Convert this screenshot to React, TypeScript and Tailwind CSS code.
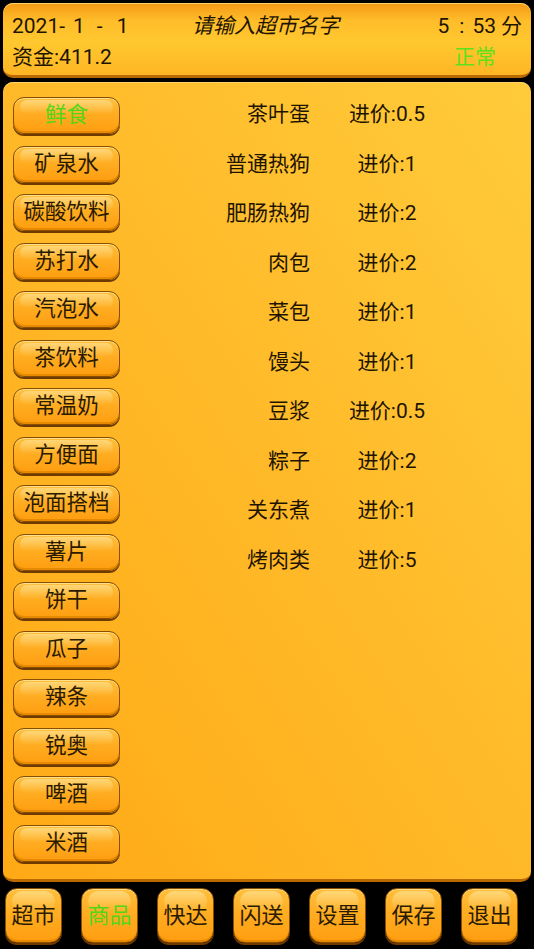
const cats = [
  "鲜食",
  "矿泉水",
  "碳酸饮料",
  "苏打水",
  "汽泡水",
  "茶饮料",
  "常温奶",
  "方便面",
  "泡面搭档",
  "薯片",
  "饼干",
  "瓜子",
  "辣条",
  "锐奥",
  "啤酒",
  "米酒",
];

const goods = [
  { name: "茶叶蛋", price: "0.5" },
  { name: "普通热狗", price: "1" },
  { name: "肥肠热狗", price: "2" },
  { name: "肉包", price: "2" },
  { name: "菜包", price: "1" },
  { name: "馒头", price: "1" },
  { name: "豆浆", price: "0.5" },
  { name: "粽子", price: "2" },
  { name: "关东煮", price: "1" },
  { name: "烤肉类", price: "5" },
];

const tabs = ["超市", "商品", "快达", "闪送", "设置", "保存", "退出"];

const font = "font-['Roboto','Noto_Sans_CJK_SC',sans-serif]";

function GlossButton({ label, active, className }: { label: string; active?: boolean; className: string }) {
  return (
    <button
      className={`relative flex items-center justify-center border border-[#8a4e00] bg-[linear-gradient(to_bottom,#ffbf3c_0%,#ffad22_45%,#ff9d10_100%)] shadow-[0_2px_0_#6e3a00,inset_0_1px_0_#ffe08a,inset_0_-2px_0_#e88a00] ${className} ${
        active ? "text-[#52d61a]" : "text-[#2a1a00]"
      }`}
    >
      <span className="pointer-events-none absolute inset-x-[6px] top-[2px] h-[40%] rounded-[inherit] bg-[linear-gradient(to_bottom,rgba(255,235,170,0.55),rgba(255,220,120,0))]" />
      <span className="relative">{label}</span>
    </button>
  );
}

export default function App() {
  return (
    <div className={`flex h-[949px] w-[534px] flex-col bg-black px-[3px] pt-[3px] ${font}`}>
      <header className="flex h-[75px] flex-col rounded-[10px] border-b-[3px] border-[#b86a00] bg-[linear-gradient(to_bottom,#f49a16_0%,#ffbd2a_25%,#ffc82f_55%,#ffb524_100%)] px-[9px] pt-[13px] text-[21px] leading-none text-[#1e1400] shadow-[inset_0_1px_0_#ffd36a]">
        <div className="flex items-center">
          <span className="flex w-[140px]">
            <span>2021-</span>
            <span className="ml-[8px]">1</span>
            <span className="ml-[12px]">-</span>
            <span className="ml-[14px]">1</span>
          </span>
          <span className="ml-[40px] italic">请输入超市名字</span>
          <span className="ml-auto flex">
            <span>5</span>
            <span className="ml-[10px]">:</span>
            <span className="ml-[8px]">53</span>
            <span className="ml-[5px]">分</span>
          </span>
        </div>
        <div className="mt-[10px] flex items-center justify-between">
          <span>资金:411.2</span>
          <span className="mr-[26px] text-[#5ee01a]">正常</span>
        </div>
      </header>

      <main className="mt-[4px] flex h-[800px] rounded-[10px] border-b-[3px] border-[#b86a00] bg-[linear-gradient(to_bottom_left,#ffcb3a_0%,#ffbb2a_45%,#ffa915_100%)] shadow-[inset_0_1px_0_#ffd36a]">
        <div className="flex flex-col gap-[11.5px] pl-[10px] pt-[15px]">
          {cats.map((c, i) => (
            <GlossButton
              key={c}
              label={c}
              active={i === 0}
              className="h-[37px] w-[107px] rounded-[11px] text-[21.5px]"
            />
          ))}
        </div>
        <div className="flex flex-col pt-[8px] text-[21px] text-[#1e1400]">
          {goods.map((g) => (
            <div key={g.name} className="flex h-[49.5px] items-center">
              <span className="w-[190px] text-right">{g.name}</span>
              <span className="ml-[33px] w-[88px] text-center">进价:{g.price}</span>
            </div>
          ))}
        </div>
      </main>

      <nav className="mt-[6px] flex gap-[19px] pl-[2px]">
        {tabs.map((t, i) => (
          <GlossButton
            key={t}
            label={t}
            active={i === 1}
            className="h-[55px] w-[57px] rounded-[12px] text-[22px]"
          />
        ))}
      </nav>
    </div>
  );
}
